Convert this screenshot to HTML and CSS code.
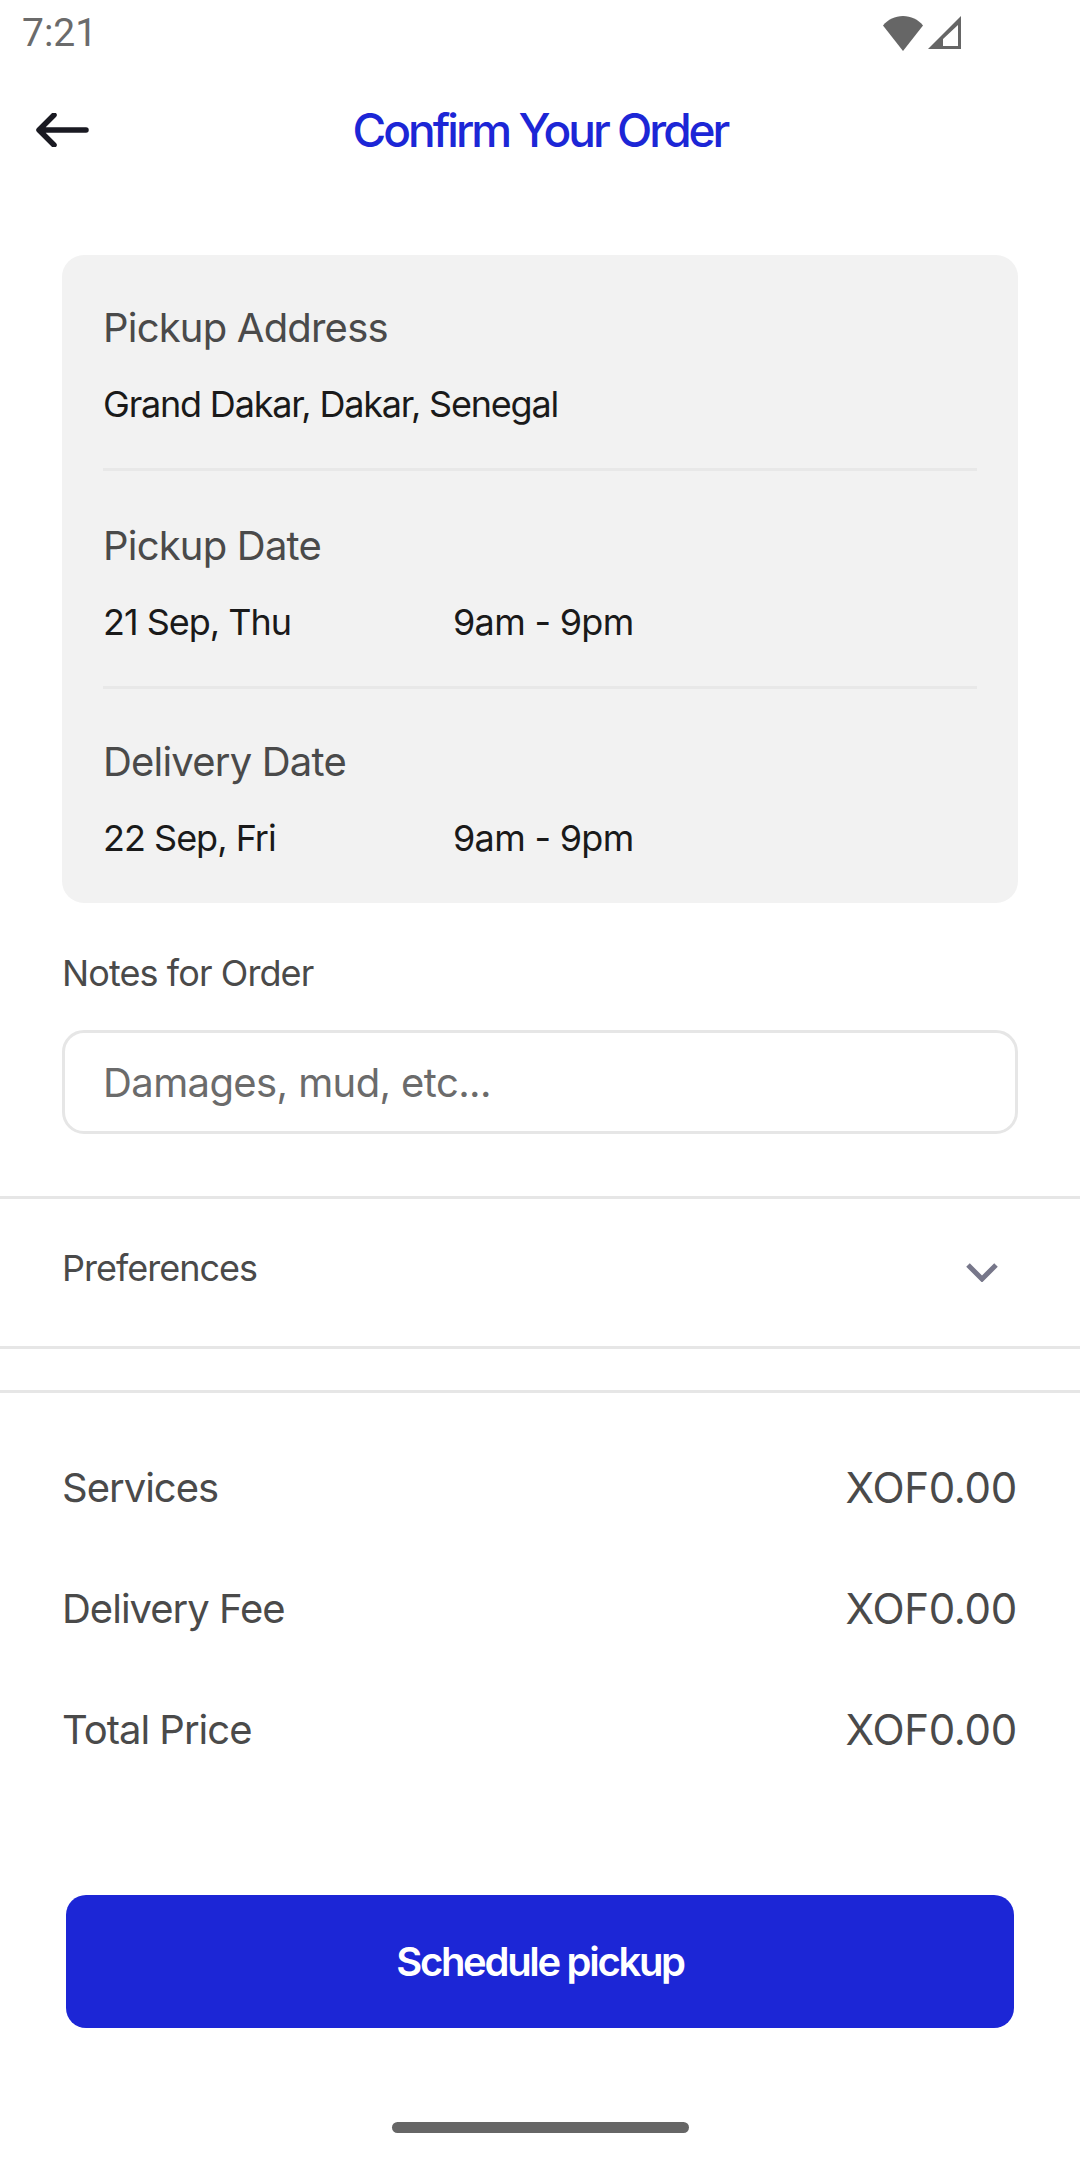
FILE: index.html
```html
<!DOCTYPE html>
<html lang="en">
<head>
<meta charset="UTF-8">
<title>Confirm Your Order</title>
<link rel="stylesheet" href="styles.css">
</head>
<body>
<div class="screen">
  <div class="status_bar">
    <span class="status_time">7:21</span>
    <div class="status_icons">
      <svg class="wifi" width="40" height="35" viewBox="0 0 40 35"><path d="M0 9.500C5 3.500 12 0 20 0s15 3.500 20 9.500L20 35z" fill="#666"/></svg>
      <svg class="signal" width="34" height="34" viewBox="0 0 34 34"><path d="M33 0v33H0zM30 9L15 23v7h15z" fill="#666" fill-rule="evenodd"/></svg>
    </div>
  </div>
  <div class="header">
    <svg class="back" width="54" height="34" viewBox="0 0 54 34"><path d="M50 17H4M18 2L3 17l15 15" fill="none" stroke="#1a1a22" stroke-width="5.500" stroke-linecap="round" stroke-linejoin="round"/></svg>
    <h1 class="title">Confirm Your Order</h1>
  </div>
  <div class="card">
    <div class="section">
      <div class="section_label">Pickup Address</div>
      <div class="section_value"><span class="address">Grand Dakar, Dakar, Senegal</span></div>
    </div>
    <div class="section">
      <div class="section_label">Pickup Date</div>
      <div class="section_value"><span class="date">21 Sep, Thu</span><span>9am - 9pm</span></div>
    </div>
    <div class="section">
      <div class="section_label">Delivery Date</div>
      <div class="section_value"><span class="date">22 Sep, Fri</span><span>9am - 9pm</span></div>
    </div>
  </div>
  <div class="notes">
    <div class="notes_label">Notes for Order</div>
    <div class="notes_input">Damages, mud, etc...</div>
  </div>
  <div class="preferences">
    <span class="preferences_label">Preferences</span>
    <svg class="chevron" width="34" height="20" viewBox="0 0 34 20"><path d="M3 3l14 14L31 3" fill="none" stroke="#77778a" stroke-width="5"/></svg>
  </div>
  <div class="summary">
    <div class="summary_row"><span>Services</span><span class="price">XOF0.00</span></div>
    <div class="summary_row"><span>Delivery Fee</span><span class="price">XOF0.00</span></div>
    <div class="summary_row"><span>Total Price</span><span class="price">XOF0.00</span></div>
  </div>
  <div class="submit">Schedule pickup</div>
  <div class="home_bar"></div>
</div>
</body>
</html>
```
FILE: styles.css
```css
* {
  margin: 0;
  padding: 0;
  box-sizing: border-box;
}
body {
  background-color: #fff;
  font-family: Inter, "Noto Sans", sans-serif;
}
.screen {
  display: flex;
  flex-direction: column;
  width: 1080px;
  height: 2160px;
  overflow: hidden;
}
.status_bar {
  display: flex;
  justify-content: space-between;
  align-items: center;
  height: 66px;
  padding: 0 118px 0 22px;
}
.status_time {
  font-family: Roboto, sans-serif;
  font-size: 39px;
  color: #6b6b6b;
}
.status_icons {
  display: flex;
  align-items: center;
  gap: 5px;
}
.header {
  display: flex;
  align-items: center;
  height: 128px;
  padding-left: 36px;
}
.back {
  flex: none;
}
.title {
  flex: 1;
  padding-right: 90px;
  text-align: center;
  font-size: 46px;
  font-weight: 500;
  letter-spacing: -3px;
  color: #1c26d6;
}
.card {
  margin: 61px 62px 0;
  padding: 0 41px;
  height: 648px;
  background-color: #f2f2f2;
  border-radius: 22px;
}
.section {
  padding: 45px 0 38px;
  border-bottom: 3px solid #e8e8e8;
}
.section:first-child {
  padding-top: 43px;
}
.section:last-child {
  padding-top: 43px;
  border-bottom: none;
}
.section_label {
  line-height: 60px;
  font-size: 40px;
  letter-spacing: -0.8px;
  color: #4a4a4a;
}
.section_value {
  display: flex;
  margin-top: 20px;
  line-height: 52px;
  font-size: 36px;
  letter-spacing: -0.7px;
  color: #1a1a1a;
}
.address {
  letter-spacing: -1.200px;
}
.date {
  width: 350px;
  letter-spacing: -1px;
}
.notes {
  padding: 0 62px;
  margin-top: 43px;
}
.notes_label {
  line-height: 54px;
  font-size: 36px;
  letter-spacing: -0.9px;
  color: #4a4a4a;
}
.notes_input {
  display: flex;
  align-items: center;
  height: 104px;
  margin-top: 30px;
  padding-left: 38px;
  border: 3px solid #e6e6e6;
  border-radius: 22px;
  font-size: 40px;
  letter-spacing: -0.6px;
  color: #6b6b6b;
}
.preferences {
  display: flex;
  justify-content: space-between;
  align-items: center;
  height: 153px;
  margin-top: 62px;
  padding: 0 81px 2px 62px;
  border-top: 3px solid #e6e6e6;
  border-bottom: 3px solid #e6e6e6;
  font-size: 36px;
  letter-spacing: -1px;
  color: #4a4a4a;
}
.preferences_label {
  margin-bottom: 8px;
}
.summary {
  display: flex;
  flex-direction: column;
  gap: 61px;
  margin-top: 41px;
  padding: 65px 63px 0 62px;
  border-top: 3px solid #e6e6e6;
}
.summary_row {
  display: flex;
  justify-content: space-between;
  line-height: 60px;
  font-size: 40px;
  letter-spacing: -1px;
  color: #4a4a4a;
}
.price {
  font-size: 42px;
  letter-spacing: -0.3px;
}
.submit {
  display: flex;
  justify-content: center;
  align-items: center;
  height: 133px;
  margin: 135px 66px 0;
  background-color: #1c26d6;
  border-radius: 20px;
  font-size: 40px;
  font-weight: 600;
  letter-spacing: -2.300px;
  color: #fff;
}
.home_bar {
  width: 297px;
  height: 11px;
  margin: 94px auto 0;
  background-color: #666;
  border-radius: 6px;
}
```
